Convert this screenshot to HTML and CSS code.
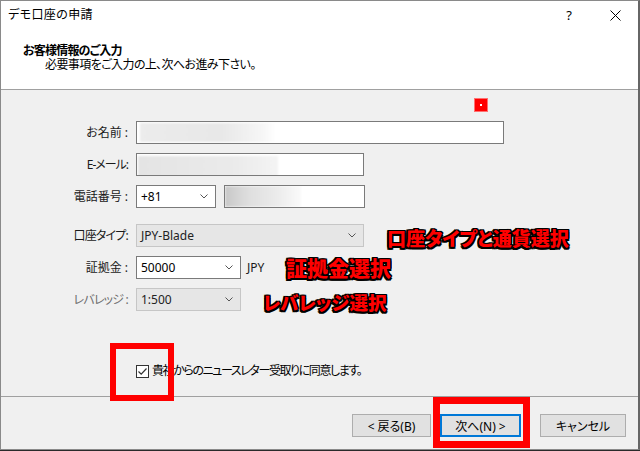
FILE: index.html
```html
<!DOCTYPE html>
<html lang="ja">
<head>
<meta charset="utf-8">
<title>デモ口座の申請</title>
<link rel="stylesheet" href="styles.css">
</head>
<body>
<div class="window">
  <div class="titlebar">
    <span class="title">デモ口座の申請</span>
    <span class="tb-btn help">?</span>
    <span class="tb-btn close"><svg width="11" height="11" viewBox="0 0 11 11"><path d="M0.5 0.5 L10.5 10.5 M10.5 0.5 L0.5 10.5" stroke="#000" stroke-width="1" fill="none"/></svg></span>
  </div>
  <div class="header">
    <div class="h-title">お客様情報のご入力</div>
    <div class="h-sub">必要事項をご入力の上、次へお進み下さい。</div>
  </div>
  <div class="body">
    <div class="form">
      <div class="lbl">お名前 :</div>
      <div class="ctl"><div class="field w-name"><span class="redact r-name"></span></div></div>

      <div class="lbl l-mail">E-メール:</div>
      <div class="ctl"><div class="field w-mail"><span class="redact r-mail"></span></div></div>

      <div class="lbl">電話番号 :</div>
      <div class="ctl">
        <div class="select w-code"><span class="val">+81</span><svg class="chev" width="8" height="5" viewBox="0 0 8 5"><path d="M0.5 0.5 L4 4 L7.5 0.5" stroke="#555" fill="none"/></svg></div>
        <div class="field w-phone"><span class="redact r-phone"></span></div>
      </div>

      <div class="lbl sp l-kana">口座タイプ:</div>
      <div class="ctl sp"><div class="select disabled w-acct"><span class="val">JPY-Blade</span><svg class="chev" width="8" height="5" viewBox="0 0 8 5"><path d="M0.5 0.5 L4 4 L7.5 0.5" stroke="#555" fill="none"/></svg></div></div>

      <div class="lbl">証拠金 :</div>
      <div class="ctl"><div class="select w-small"><span class="val">50000</span><svg class="chev" width="8" height="5" viewBox="0 0 8 5"><path d="M0.5 0.5 L4 4 L7.5 0.5" stroke="#555" fill="none"/></svg></div><span class="unit">JPY</span></div>

      <div class="lbl dim l-kana">レバレッジ :</div>
      <div class="ctl"><div class="select disabled w-small"><span class="val">1:500</span><svg class="chev" width="8" height="5" viewBox="0 0 8 5"><path d="M0.5 0.5 L4 4 L7.5 0.5" stroke="#555" fill="none"/></svg></div></div>
    </div>
    <div class="agree">
      <span class="checkbox"><svg width="11" height="11" viewBox="0 0 11 11"><path d="M1.5 5.5 L4.2 8.2 L9.5 2.5" stroke="#333" stroke-width="1.2" fill="none"/></svg></span>
      <span class="agree-text">貴社からのニュースレター受取りに同意します。</span>
    </div>
  </div>
  <div class="footer">
    <button class="btn b-back">&lt; 戻る(B)</button>
    <button class="btn b-next focus">次へ(N) &gt;</button>
    <button class="btn b-cancel">キャンセル</button>
  </div>

  <span class="marker"></span>
  <span class="note n-acct">口座タイプと通貨選択</span>
  <span class="note n-margin">証拠金選択</span>
  <span class="note n-lev">レバレッジ選択</span>
  <span class="hl hl-check"></span>
  <span class="hl hl-next"></span>
</div>
</body>
</html>
```
FILE: styles.css
```css
html, body {
  margin: 0;
  padding: 0;
  background: #2a2a2a;
}
body {
  font-family: "Noto Sans", "Noto Sans CJK JP", sans-serif;
  font-size: 12px;
  color: #000;
  font-feature-settings: "palt";
}
.window {
  position: relative;
  width: 640px;
  height: 450px;
  box-sizing: border-box;
  border-left: 1px solid #8a8a8a;
  border-top: 1px solid #8a8a8a;
  border-right: 2px solid #666;
  border-bottom: 1px solid #8a8a8a;
  background: #fff;
  display: flex;
  flex-direction: column;
}
.titlebar {
  height: 28px;
  display: flex;
  align-items: center;
  padding-left: 7px;
}
.title {
  flex: 1;
  line-height: 16px;
  letter-spacing: 0.4px;
}
.tb-btn {
  width: 46px;
  height: 28px;
  display: flex;
  align-items: center;
  justify-content: center;
}
.help {
  font-size: 13px;
}
.header {
  height: 61px;
  box-sizing: border-box;
  padding: 15px 0 0 22px;
  border-bottom: 1px solid #a0a0a0;
  line-height: 14px;
}
.h-title {
  font-weight: bold;
  letter-spacing: -0.8px;
}
.h-sub {
  padding-left: 22px;
  letter-spacing: -0.6px;
}
.body {
  height: 307px;
  box-sizing: border-box;
  background: #f0f0f0;
  border-bottom: 1px solid #a0a0a0;
  padding-top: 31px;
}
.form {
  display: grid;
  grid-template-columns: 127px auto;
  grid-template-rows: 23px 23px 23px 30px 23px 23px;
  column-gap: 8px;
  row-gap: 9px;
}
.lbl {
  display: flex;
  align-items: center;
  justify-content: flex-end;
  line-height: 16px;
  color: #1a1a1a;
  white-space: nowrap;
}
.l-mail {
  letter-spacing: -1px;
}
.l-kana {
  letter-spacing: -0.8px;
}
.lbl.dim {
  color: #6d6d6d;
}
.sp {
  padding-top: 7px;
}
.ctl {
  display: flex;
  align-items: center;
  gap: 8px;
}
.field {
  height: 23px;
  box-sizing: border-box;
  border: 1px solid #7a7a7a;
  background: #fff;
  display: flex;
  align-items: center;
  overflow: hidden;
}
.w-name { width: 368px; }
.w-mail { width: 228px; }
.w-phone { width: 141px; }
.redact {
  display: block;
  height: 19px;
  filter: blur(1px);
}
.r-name {
  width: 136px;
  margin-left: 3px;
  background: linear-gradient(90deg, #ececec 0%, #e8e8e8 60%, #f6f6f6 90%, #fff 100%);
}
.r-mail {
  width: 140px;
  margin-left: 1px;
  margin-top: 4px;
  height: 21px;
  background: linear-gradient(90deg, #e4e4e4 0%, #ebebeb 70%, #f4f4f4 100%);
}
.r-phone {
  width: 76px;
  height: 21px;
  background: linear-gradient(90deg, #c8c8c8 0%, #dedede 30%, #ececec 70%, #fafafa 100%);
}
.select {
  height: 23px;
  box-sizing: border-box;
  border: 1px solid #7a7a7a;
  background: #fff;
  display: flex;
  align-items: center;
  padding: 0 7px 0 4px;
}
.select .val {
  flex: 1;
  line-height: 16px;
}
.select.disabled {
  background: #e6e6e6;
  border-color: #c6c6c6;
}
.select.disabled .val {
  color: #222;
}
.chev {
  display: block;
}
.w-code { width: 80px; }
.w-acct { width: 228px; }
.w-small { width: 105px; }
.unit {
  margin-left: -2px;
  color: #1a1a1a;
}
.agree {
  margin: 52px 0 0 135px;
  display: flex;
  align-items: center;
  gap: 3px;
}
.checkbox {
  width: 13px;
  height: 13px;
  box-sizing: border-box;
  border: 1px solid #333;
  background: #fff;
  display: flex;
  align-items: center;
  justify-content: center;
}
.agree-text {
  line-height: 16px;
  letter-spacing: -1.4px;
}
.footer {
  flex: 1;
  background: #f0f0f0;
  display: flex;
  justify-content: flex-end;
  align-items: flex-start;
  padding: 17px 12px 0 0;
}
.btn {
  height: 23px;
  box-sizing: border-box;
  border: 1px solid #adadad;
  background: #e1e1e1;
  font-family: inherit;
  font-size: 12px;
  font-feature-settings: "palt";
  color: #000;
  padding: 0;
  margin: 0;
}
.b-back { width: 79px; }
.b-next { width: 81px; margin-left: 9px; }
.b-cancel { width: 86px; margin-left: 19px; }
.btn.focus {
  border: 2px solid #0078d7;
}
.marker {
  position: absolute;
  left: 473px;
  top: 97px;
  width: 14px;
  height: 14px;
  box-sizing: border-box;
  background: #ff0000;
  border: 1px solid #ff7070;
}
.marker::after {
  content: "";
  position: absolute;
  left: 5px;
  top: 5px;
  width: 2px;
  height: 2px;
  background: #fff;
}
.note {
  position: absolute;
  font-family: "Noto Sans CJK JP", sans-serif;
  font-weight: 900;
  line-height: 22px;
  color: #ff0000;
  white-space: nowrap;
  text-shadow:
    -1.5px -1.5px 0 #000, 1.5px -1.5px 0 #000, -1.5px 1.5px 0 #000, 1.5px 1.5px 0 #000,
    0 -1.5px 0 #000, 0 1.5px 0 #000, -1.5px 0 0 #000, 1.5px 0 0 #000;
}
.n-acct { left: 386px; top: 226px; font-size: 19px; }
.n-margin { left: 285px; top: 255px; font-size: 21px; }
.n-lev { left: 262px; top: 290px; font-size: 18.5px; }
.hl {
  position: absolute;
  box-sizing: border-box;
  border: 6px solid #ff0000;
}
.hl-check {
  left: 109px;
  top: 342px;
  width: 64px;
  height: 58px;
}
.hl-next {
  left: 432px;
  top: 396px;
  width: 97px;
  height: 51px;
  border-width: 7px;
}
```
